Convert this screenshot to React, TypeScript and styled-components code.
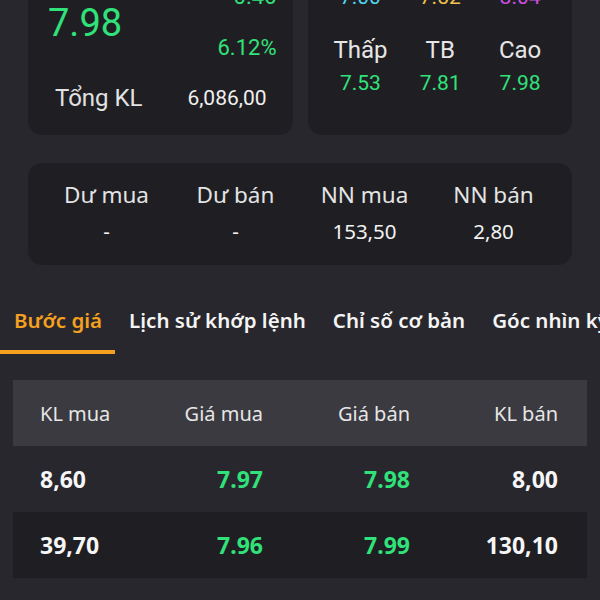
import React from 'react';
import styled, { createGlobalStyle } from 'styled-components';

const GlobalStyle = createGlobalStyle`
  html, body {
    margin: 0;
    padding: 0;
    background: #28272d;
    overflow: hidden;
  }
  body {
    font-family: Roboto, "Noto Sans", sans-serif;
    color: #ececec;
  }
`;

const green = '#31e27a';

const Page = styled.main`
  width: 600px;
  height: 660px;
  margin-top: -60px;
  display: flex;
  flex-direction: column;
`;

const CardRow = styled.div`
  display: grid;
  grid-template-columns: 1fr 1fr;
  gap: 15px;
  padding: 0 28px;
`;

const Card = styled.section`
  background: #1f1f23;
  border-radius: 14px;
`;

const PriceCard = styled(Card)`
  padding: 43px 16px 22px 20px;
  display: flex;
  flex-direction: column;
  gap: 21px;
`;

const PriceRow = styled.div`
  display: flex;
  align-items: center;
  justify-content: space-between;
`;

const BigPrice = styled.div`
  font-size: 38px;
  color: ${green};
  line-height: 44px;
`;

const ChangeCol = styled.div`
  display: flex;
  flex-direction: column;
  align-items: flex-end;
  gap: 23px;
`;

const Change = styled.div`
  font-size: 22px;
  line-height: 28px;
  color: ${green};
`;

const TotalRow = styled.div`
  display: flex;
  align-items: center;
  justify-content: space-between;
  padding: 0 10px 0 7px;
  line-height: 30px;
`;

const TotalLabel = styled.span`
  font-size: 24px;
  color: #e2e2e2;
`;

const TotalValue = styled.span`
  font-size: 21px;
  color: #f0f0f0;
`;

const RangeCard = styled(Card)`
  padding: 8px 12px 35px 13px;
  display: grid;
  grid-template-columns: repeat(3, 1fr);
  row-gap: 20px;
`;

const RangeCell = styled.div`
  display: flex;
  flex-direction: column;
  align-items: center;
`;

const RangeLabel = styled.div`
  font-size: 24px;
  line-height: 32px;
  color: #e6e6e6;
`;

const RangeValue = styled.div<{ tone: string }>`
  font-size: 21px;
  line-height: 34px;
  color: ${({ tone }) => tone};
`;

const StatsCard = styled(Card)`
  margin: 28px 28px 0;
  padding: 17px 14px 19px;
  display: grid;
  grid-template-columns: repeat(4, 1fr);
  font-family: "Noto Sans", sans-serif;
`;

const StatCell = styled.div`
  display: flex;
  flex-direction: column;
  align-items: center;
  gap: 6px;
`;

const StatLabel = styled.div`
  font-size: 22.5px;
  line-height: 30px;
  color: #e4e4e4;
`;

const StatValue = styled.div`
  font-size: 20.5px;
  line-height: 30px;
  color: #f2f2f2;
`;

const Tabs = styled.nav`
  margin-top: 41px;
  display: flex;
  white-space: nowrap;
  overflow: hidden;
  font-family: "Noto Sans", sans-serif;
`;

const Tab = styled.div<{ active?: boolean }>`
  padding: 0 13px 16px 14px;
  font-size: 20.5px;
  font-weight: 600;
  line-height: 28px;
  color: ${({ active }) => (active ? '#f5a11f' : '#f4f4f4')};
  border-bottom: 4px solid ${({ active }) => (active ? '#f5a11f' : 'transparent')};
`;

const Table = styled.div`
  margin: 26px 13px 0;
  font-family: "Noto Sans", sans-serif;
`;

const TableRow = styled.div<{ shade: 'head' | 'plain' | 'dark' }>`
  display: grid;
  grid-template-columns: 1fr 147px 147px 148px;
  align-items: center;
  height: 66px;
  padding: 0 29px 0 27px;
  background: ${({ shade }) =>
    shade === 'head' ? '#3a3a40' : shade === 'dark' ? '#1f1f23' : 'transparent'};
`;

const HeadCell = styled.div<{ left?: boolean }>`
  font-size: 20px;
  color: #e6e6e6;
  text-align: ${({ left }) => (left ? 'left' : 'right')};
`;

const Cell = styled.div<{ left?: boolean; price?: boolean }>`
  font-size: 23px;
  font-weight: 700;
  color: ${({ price }) => (price ? green : '#f6f6f6')};
  text-align: ${({ left }) => (left ? 'left' : 'right')};
`;

const ranges = [
  { label: 'Sàn', value: '7.00', tone: '#4fd6ee' },
  { label: 'TC', value: '7.52', tone: '#f2c14e' },
  { label: 'Trần', value: '8.04', tone: '#cf4fe6' },
  { label: 'Thấp', value: '7.53', tone: green },
  { label: 'TB', value: '7.81', tone: green },
  { label: 'Cao', value: '7.98', tone: green },
];

const stats = [
  { label: 'Dư mua', value: '-' },
  { label: 'Dư bán', value: '-' },
  { label: 'NN mua', value: '153,50' },
  { label: 'NN bán', value: '2,80' },
];

const tabs = ['Bước giá', 'Lịch sử khớp lệnh', 'Chỉ số cơ bản', 'Góc nhìn kỹ thuật'];

const orders = [
  { buyVol: '8,60', buy: '7.97', sell: '7.98', sellVol: '8,00' },
  { buyVol: '39,70', buy: '7.96', sell: '7.99', sellVol: '130,10' },
];

function App(): JSX.Element {
  return (
    <>
      <GlobalStyle />
      <Page>
        <CardRow>
          <PriceCard>
            <PriceRow>
              <BigPrice>7.98</BigPrice>
              <ChangeCol>
                <Change>0.46</Change>
                <Change>6.12%</Change>
              </ChangeCol>
            </PriceRow>
            <TotalRow>
              <TotalLabel>Tổng KL</TotalLabel>
              <TotalValue>6,086,00</TotalValue>
            </TotalRow>
          </PriceCard>
          <RangeCard>
            {ranges.map((r) => (
              <RangeCell key={r.label}>
                <RangeLabel>{r.label}</RangeLabel>
                <RangeValue tone={r.tone}>{r.value}</RangeValue>
              </RangeCell>
            ))}
          </RangeCard>
        </CardRow>

        <StatsCard>
          {stats.map((s) => (
            <StatCell key={s.label}>
              <StatLabel>{s.label}</StatLabel>
              <StatValue>{s.value}</StatValue>
            </StatCell>
          ))}
        </StatsCard>

        <Tabs>
          {tabs.map((t, i) => (
            <Tab key={t} active={i === 0}>
              {t}
            </Tab>
          ))}
        </Tabs>

        <Table>
          <TableRow shade="head">
            <HeadCell left>KL mua</HeadCell>
            <HeadCell>Giá mua</HeadCell>
            <HeadCell>Giá bán</HeadCell>
            <HeadCell>KL bán</HeadCell>
          </TableRow>
          {orders.map((o, i) => (
            <TableRow key={o.buyVol} shade={i % 2 === 0 ? 'plain' : 'dark'}>
              <Cell left>{o.buyVol}</Cell>
              <Cell price>{o.buy}</Cell>
              <Cell price>{o.sell}</Cell>
              <Cell>{o.sellVol}</Cell>
            </TableRow>
          ))}
        </Table>
      </Page>
    </>
  );
}

export default App;
